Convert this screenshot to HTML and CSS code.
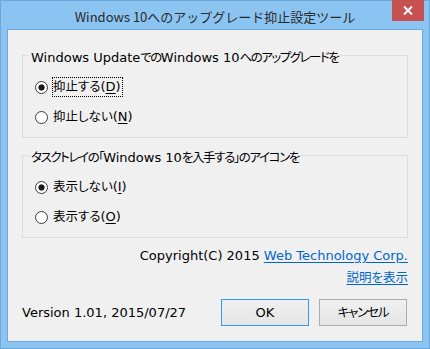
FILE: index.html
```html
<!DOCTYPE html>
<html lang="ja">
<head>
<meta charset="utf-8">
<title>Windows 10へのアップグレード抑止設定ツール</title>
<link rel="stylesheet" href="styles.css">
</head>
<body>
<div class="window">
  <div class="titlebar">
    <div class="tb-left"></div>
    <div class="title">Windows 10へのアップグレード抑止設定ツール</div>
    <div class="tb-right">
      <div class="close" aria-label="閉じる">
        <svg width="10" height="9" viewBox="0 0 10 9"><path d="M1 0.5 L9 8.5 M9 0.5 L1 8.5" stroke="#fff" stroke-width="2" fill="none"/></svg>
      </div>
    </div>
  </div>
  <div class="client">
    <div class="group">
      <div class="group-title">Windows Update<span class="ja tight">での</span>Windows 10<span class="ja tight">へのアップグレードを</span></div>
      <div class="opt"><span class="radio checked"></span><span class="label focus"><span class="ja">抑止する</span>(<u>D</u>)</span></div>
      <div class="opt"><span class="radio"></span><span class="label"><span class="ja">抑止しない</span>(<u>N</u>)</span></div>
    </div>
    <div class="group second">
      <div class="group-title"><span class="ja tight">タスクトレイの「</span>Windows 10<span class="ja tight">を入手する」のアイコンを</span></div>
      <div class="opt"><span class="radio checked"></span><span class="label"><span class="ja">表示しない</span>(<u>I</u>)</span></div>
      <div class="opt"><span class="radio"></span><span class="label"><span class="ja">表示する</span>(<u>O</u>)</span></div>
    </div>
    <div class="links">
      <div class="copy">Copyright(C) 2015 <a class="link" href="#">Web Technology Corp.</a></div>
      <div class="copy"><a class="link ja" href="#">説明を表示</a></div>
    </div>
    <div class="footer">
      <span class="version">Version 1.01, 2015/07/27</span>
      <span class="btn default">OK</span>
      <span class="btn"><span class="ja btn-ja">キャンセル</span></span>
    </div>
  </div>
</div>
</body>
</html>
```
FILE: styles.css
```css
html, body {
  margin: 0;
  padding: 0;
}
body {
  width: 430px;
  height: 349px;
  overflow: hidden;
  font-family: "DejaVu Sans", "Noto Sans CJK JP", sans-serif;
  font-size: 13px;
  color: #000;
}
.ja {
  font-size: 12.5px;
  font-feature-settings: "palt";
}
.ja.tight {
  letter-spacing: -1.5px;
}
.group.second .ja.tight {
  letter-spacing: -1.4px;
}
.ja.btn-ja {
  letter-spacing: -1.2px;
}
.window {
  box-sizing: border-box;
  width: 430px;
  height: 349px;
  background: #8cc4f1;
  border: 1px solid #6ca8dc;
  display: flex;
  flex-direction: column;
}
.titlebar {
  height: 28px;
  display: grid;
  grid-template-columns: 1fr auto 1fr;
  align-items: start;
}
.title {
  font-family: "Noto Sans CJK JP", sans-serif;
  font-size: 13px;
  line-height: 20px;
  color: #2a2a2a;
  margin-top: 6px;
  white-space: nowrap;
}
.tb-right {
  display: flex;
  justify-content: flex-end;
}
.close {
  width: 32px;
  height: 21px;
  margin-top: -1px;
  margin-right: 5px;
  background: #c75050;
  display: flex;
  align-items: center;
  justify-content: center;
}
.client {
  flex: 1;
  margin: 0 6px 6px;
  background: #f0f0f0;
  border: 1px solid #6ca8dc;
  padding: 25px 14px 0;
  display: flex;
  flex-direction: column;
}
.group {
  border: 1px solid #dcdcdc;
  padding: 0 0 5px;
}
.group.second {
  margin-top: 17px;
}
.group-title {
  width: fit-content;
  margin: -6px 0 0 6px;
  padding: 0 2px;
  background: #f0f0f0;
  line-height: 16px;
  white-space: nowrap;
}
.group-title + .opt {
  margin-top: 6px;
}
.opt {
  height: 30px;
  display: flex;
  align-items: center;
  padding-left: 12px;
}
.radio {
  box-sizing: border-box;
  width: 13px;
  height: 13px;
  border: 1px solid #3c3c3c;
  border-radius: 50%;
  background: #fff;
}
.radio.checked {
  background: radial-gradient(circle at center, #1a1a1a 0, #1a1a1a 2.8px, #fff 3.4px);
}
.label {
  margin-left: 4px;
  padding: 0 1px 0 0;
  border: 1px dotted transparent;
  line-height: 18px;
  white-space: nowrap;
}
.label.focus {
  border-color: #000;
}
.label u {
  text-decoration-thickness: 1px;
  text-underline-offset: 2px;
}
.links {
  margin-top: 10px;
  display: flex;
  flex-direction: column;
  align-items: flex-end;
  gap: 6px;
}
.copy {
  line-height: 16px;
  white-space: nowrap;
}
.link {
  color: #0066cc;
  text-decoration: underline;
  text-underline-offset: 2px;
}
.footer {
  margin-top: 13px;
  display: flex;
  align-items: center;
  padding-right: 1px;
}
.version {
  flex: 1;
  line-height: 16px;
  white-space: nowrap;
}
.btn {
  box-sizing: border-box;
  width: 88px;
  height: 27px;
  border: 1px solid #adadad;
  background: linear-gradient(#f0f0f0, #e5e5e5);
  display: flex;
  align-items: center;
  justify-content: center;
  line-height: 16px;
  margin-left: 10px;
}
.btn.default {
  border-color: #3399ff;
}
```
